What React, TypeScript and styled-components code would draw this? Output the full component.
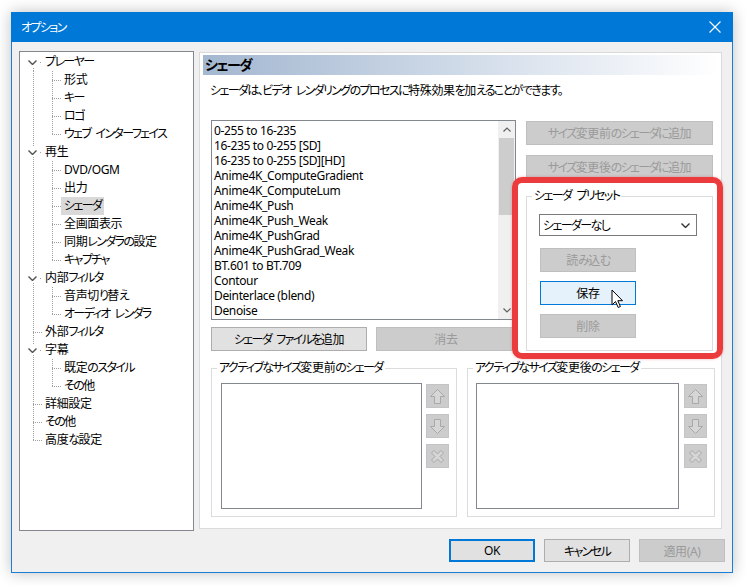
import React from "react";
import styled, { createGlobalStyle, css } from "styled-components";

const GlobalStyle = createGlobalStyle`
  html, body {
    margin: 0;
    background: #ffffff;
  }
  body {
    font-family: "Noto Sans", "Noto Sans CJK JP", sans-serif;
    font-size: 12px;
    letter-spacing: -0.35px;
    font-feature-settings: "palt";
    color: #000;
  }
  * { box-sizing: border-box; }
`;

// kana in the UI font are narrower than Noto's, tighten them
const Kana = styled.span`
  letter-spacing: -1.6px;
  word-spacing: 3.5px;
`;

const T = ({ children }: { children: string }) => {
  const parts = children.split(/([\u3001-\u30ff][\u3001-\u30ff ]*)/);
  return (
    <>
      {parts.map((p, i) => (/[\u3001-\u30ff]/.test(p) ? <Kana key={i}>{p}</Kana> : p))}
    </>
  );
};

const Page = styled.div`
  width: 746px;
  height: 586px;
  padding: 12px 0 0 11px;
`;

const Window = styled.div`
  width: 722px;
  height: 561px;
  display: flex;
  flex-direction: column;
  border: 1px solid #1a7fd4;
  border-top: none;
  box-shadow: 0 0 14px rgba(0, 0, 0, 0.25);
  background: #f0f0f0;
`;

const TitleBar = styled.div`
  height: 30px;
  margin: 0 -1px;
  background: #0078d7;
  color: #fff;
  display: flex;
  align-items: center;
  justify-content: space-between;
  padding: 0 12px 0 10px;
  font-size: 12px;
`;

const Client = styled.div`
  flex: 1;
  display: flex;
  flex-direction: column;
  padding: 9px 7px 0 7px;
`;

const Main = styled.div`
  display: flex;
  gap: 5px;
  align-items: flex-start;
`;

/* ---------- tree ---------- */

const Tree = styled.div`
  width: 175px;
  height: 480px;
  background: #fff;
  border: 1px solid #828790;
  padding-top: 1px;
`;

const TreeRow = styled.div`
  display: flex;
  height: 18px;
  align-items: center;
  line-height: 18px;
`;

type VLine = "full" | "top" | "bottom" | "none";

const dotsV = css`
  background-image: linear-gradient(to bottom, #a0a0a0 50%, transparent 50%);
  background-size: 1px 2px;
`;
const dotsH = css`
  background-image: linear-gradient(to right, #a0a0a0 50%, transparent 50%);
  background-size: 2px 1px;
`;

const Guide = styled.span<{ $w: number; $x: number; $v: VLine; $h0?: number }>`
  position: relative;
  flex: none;
  width: ${(p) => p.$w}px;
  height: 18px;
  &::before {
    content: "";
    position: absolute;
    left: ${(p) => p.$x}px;
    width: 1px;
    top: ${(p) => (p.$v === "bottom" ? 9 : 0)}px;
    height: ${(p) => (p.$v === "full" ? 18 : p.$v === "none" ? 0 : 9)}px;
    ${dotsV};
  }
  &::after {
    content: "";
    position: absolute;
    top: 9px;
    height: 1px;
    left: ${(p) => (p.$h0 === undefined ? 0 : p.$h0)}px;
    right: 0;
    display: ${(p) => (p.$h0 === undefined ? "none" : "block")};
    ${dotsH};
  }
`;

const Chevron = styled.span`
  position: absolute;
  left: 7px;
  top: 4px;
  width: 11px;
  height: 10px;
  background: #fff;
  display: flex;
  align-items: center;
  justify-content: center;
  z-index: 1;
`;

const TreeLabel = styled.span<{ $selected?: boolean }>`
  padding: 0 3px;
  height: 18px;
  white-space: nowrap;
  background: ${(p) => (p.$selected ? "#d9d9d9" : "transparent")};
`;

/* ---------- panel ---------- */

const Panel = styled.div`
  width: 523px;
  height: 477px;
  margin-top: 1px;
  background: #fff;
  border: 1px solid #dadada;
  padding: 2px 2px 0 3px;
`;

const Header = styled.div`
  height: 20px;
  background: linear-gradient(to right, #a3b7d0 0%, #cbd7e6 45%, #ffffff 100%);
  font-weight: 700;
  font-size: 14px;
  line-height: 20px;
  padding-left: 2px;
`;

const Description = styled.div`
  margin-top: 8px;
  padding-left: 7px;
  line-height: 16px;
`;

const Body = styled.div`
  padding-left: 8px;
`;

const TopArea = styled.div`
  display: flex;
  gap: 10px;
  margin-top: 21px;
`;

const LeftCol = styled.div`
  width: 305px;
  display: flex;
  flex-direction: column;
  gap: 7px;
`;

const RightCol = styled.div`
  position: relative;
  width: 187px;
  display: flex;
  flex-direction: column;
  padding-top: 1px;
  gap: 10px;
`;

const ListBox = styled.div`
  height: 200px;
  border: 1px solid #828790;
  display: flex;
  background: #fff;
`;

const ListItems = styled.div`
  flex: 1;
  padding: 2px 0 0 2px;
  overflow: hidden;
`;

const ListItem = styled.div`
  height: 15px;
  line-height: 15px;
  white-space: nowrap;
`;

const ScrollBar = styled.div`
  width: 17px;
  background: #f0f0f0;
  display: flex;
  flex-direction: column;
  align-items: center;
`;

const ScrollArrow = styled.div`
  height: 17px;
  width: 17px;
  display: flex;
  align-items: center;
  justify-content: center;
`;

const ScrollTrack = styled.div`
  flex: 1;
  width: 100%;
  padding: 0 1px;
`;

const Thumb = styled.div`
  height: 77px;
  background: #cdcdcd;
`;

const ButtonRow = styled.div`
  display: flex;
  gap: 9px;
`;

const Button = styled.button<{ $w?: number; $h?: number; $state?: "normal" | "disabled" | "hover" | "default" }>`
  position: relative;
  flex: none;
  width: ${(p) => (p.$w ? `${p.$w}px` : "100%")};
  height: ${(p) => p.$h ?? 24}px;
  font: inherit;
  letter-spacing: inherit;
  padding: 0;
  margin: 0;
  display: flex;
  align-items: center;
  justify-content: center;
  ${(p) => {
    switch (p.$state) {
      case "disabled":
        return css`
          background: #cccccc;
          border: 1px solid #bfbfbf;
          color: #9a9a9a;
        `;
      case "hover":
        return css`
          background: #e5f1fb;
          border: 1px solid #0078d7;
          color: #000;
        `;
      case "default":
        return css`
          background: #e1e1e1;
          border: 2px solid #0078d7;
          color: #000;
        `;
      default:
        return css`
          background: #e1e1e1;
          border: 1px solid #adadad;
          color: #000;
        `;
    }
  }}
`;

const Group = styled.fieldset<{ $w: number; $h: number; $pl: number }>`
  margin: 0;
  width: ${(p) => p.$w}px;
  height: ${(p) => p.$h}px;
  border: 1px solid #dcdcdc;
  padding: 7px 0 0 ${(p) => p.$pl}px;
  min-width: 0;
`;

const Legend = styled.legend<{ $pl: number }>`
  margin-left: ${(p) => 5 - p.$pl}px;
  padding: 0 2px;
  line-height: 16px;
`;

const PresetBody = styled.div`
  display: flex;
  flex-direction: column;
  padding-top: 3px;
`;

const Select = styled.div`
  width: 158px;
  height: 22px;
  border: 1px solid #7a7a7a;
  background: #fff;
  display: flex;
  align-items: center;
  justify-content: space-between;
  padding: 0 6px 0 3px;
  margin-bottom: 12px;
`;

const PresetButtons = styled.div`
  display: flex;
  flex-direction: column;
  gap: 9px;
  padding-left: 1px;
`;

const Highlight = styled.div`
  position: absolute;
  left: -14px;
  top: 57px;
  width: 211px;
  height: 182px;
  border: 6px solid #ec3b3d;
  border-radius: 10px;
  box-shadow: 0 0 3px rgba(200, 40, 40, 0.35);
  pointer-events: none;
`;

const Cursor = styled.svg`
  position: absolute;
  left: 70px;
  top: 7px;
`;

const GroupsRow = styled.div`
  display: flex;
  gap: 10px;
  margin-top: 9px;
`;

const GroupInner = styled.div<{ $gap: number }>`
  display: flex;
  gap: ${(p) => p.$gap}px;
  align-items: flex-start;
`;

const EmptyList = styled.div<{ $w: number }>`
  width: ${(p) => p.$w}px;
  height: 126px;
  border: 1px solid #828790;
  background: #fff;
`;

const IconButtons = styled.div`
  display: flex;
  flex-direction: column;
  gap: 6px;
  padding-top: 1px;
`;

const IconButton = styled.div`
  width: 23px;
  height: 24px;
  background: #cccccc;
  border: 1px solid #c4c4c4;
  display: flex;
  align-items: center;
  justify-content: center;
`;

const Footer = styled.div`
  display: flex;
  justify-content: flex-end;
  gap: 9px;
  margin-top: 8px;
`;

/* ---------- data ---------- */

type Node = { label: string; level: 0 | 1; expand?: boolean; last?: boolean; selected?: boolean; first?: boolean; end?: boolean };

const tree: Node[] = [
  { label: "プレーヤー", level: 0, expand: true, first: true },
  { label: "形式", level: 1 },
  { label: "キー", level: 1 },
  { label: "ロゴ", level: 1 },
  { label: "ウェブ インターフェイス", level: 1, last: true },
  { label: "再生", level: 0, expand: true },
  { label: "DVD/OGM", level: 1 },
  { label: "出力", level: 1 },
  { label: "シェーダ", level: 1, selected: true },
  { label: "全画面表示", level: 1 },
  { label: "同期レンダラの設定", level: 1 },
  { label: "キャプチャ", level: 1, last: true },
  { label: "内部フィルタ", level: 0, expand: true },
  { label: "音声切り替え", level: 1 },
  { label: "オーディオ レンダラ", level: 1, last: true },
  { label: "外部フィルタ", level: 0 },
  { label: "字幕", level: 0, expand: true },
  { label: "既定のスタイル", level: 1 },
  { label: "その他", level: 1, last: true },
  { label: "詳細設定", level: 0 },
  { label: "その他", level: 0 },
  { label: "高度な設定", level: 0, end: true },
];

const shaders = [
  "0-255 to 16-235",
  "16-235 to 0-255 [SD]",
  "16-235 to 0-255 [SD][HD]",
  "Anime4K_ComputeGradient",
  "Anime4K_ComputeLum",
  "Anime4K_Push",
  "Anime4K_Push_Weak",
  "Anime4K_PushGrad",
  "Anime4K_PushGrad_Weak",
  "BT.601 to BT.709",
  "Contour",
  "Deinterlace (blend)",
  "Denoise",
];

/* ---------- icons ---------- */

const ChevronDown = ({ color = "#505050", w = 9 }: { color?: string; w?: number }) => (
  <svg width={w} height={5} viewBox="0 0 9 5">
    <polyline points="0.5,0.5 4.5,4.5 8.5,0.5" fill="none" stroke={color} strokeWidth="1.4" />
  </svg>
);

const ScrollChevron = ({ up }: { up?: boolean }) => (
  <svg width="8" height="5" viewBox="0 0 8 5">
    <polyline
      points={up ? "0.5,4.5 4,1 7.5,4.5" : "0.5,0.5 4,4 7.5,0.5"}
      fill="none"
      stroke="#606060"
      strokeWidth="1.2"
    />
  </svg>
);

const ArrowIcon = ({ kind }: { kind: "up" | "down" | "x" }) => {
  const stroke = "#a9a9a9";
  const fill = "#d6d6d6";
  if (kind === "x") {
    return (
      <svg width="15" height="15" viewBox="0 0 15 15">
        <path
          d="M1.5 4 L4 1.5 L7.5 5 L11 1.5 L13.5 4 L10 7.5 L13.5 11 L11 13.5 L7.5 10 L4 13.5 L1.5 11 L5 7.5 Z"
          fill={fill}
          stroke={stroke}
        />
      </svg>
    );
  }
  const d = "M7.5 0.5 L14.5 7.5 L10.5 7.5 L10.5 14.5 L4.5 14.5 L4.5 7.5 L0.5 7.5 Z";
  return (
    <svg width="15" height="15" viewBox="0 0 15 15" style={kind === "down" ? { transform: "rotate(180deg)" } : undefined}>
      <path d={d} fill={fill} stroke={stroke} />
    </svg>
  );
};

const CloseIcon = () => (
  <svg width="12" height="12" viewBox="0 0 12 12">
    <path d="M0.5 0.5 L11.5 11.5 M11.5 0.5 L0.5 11.5" stroke="#fff" strokeWidth="1.1" />
  </svg>
);

function TreeItem({ node }: { node: Node }) {
  if (node.level === 0) {
    const v: VLine = node.first ? "bottom" : node.end ? "top" : "full";
    return (
      <TreeRow>
        <Guide $w={22} $x={13} $v={v} $h0={node.expand ? 20 : 13}>
          {node.expand && (
            <Chevron>
              <ChevronDown />
            </Chevron>
          )}
        </Guide>
        <TreeLabel $selected={node.selected}>
          <T>{node.label}</T>
        </TreeLabel>
      </TreeRow>
    );
  }
  return (
    <TreeRow>
      <Guide $w={22} $x={13} $v="full" />
      <Guide $w={19} $x={10} $v={node.last ? "top" : "full"} $h0={10} />
      <TreeLabel $selected={node.selected}>
        <T>{node.label}</T>
      </TreeLabel>
    </TreeRow>
  );
}

function ActiveGroup({ title, w, pl, listW, gap }: { title: string; w: number; pl: number; listW: number; gap: number }) {
  return (
    <Group $w={w} $h={157} $pl={pl}>
      <Legend $pl={pl}>
        <T>{title}</T>
      </Legend>
      <GroupInner $gap={gap}>
        <EmptyList $w={listW} />
        <IconButtons>
          <IconButton>
            <ArrowIcon kind="up" />
          </IconButton>
          <IconButton>
            <ArrowIcon kind="down" />
          </IconButton>
          <IconButton>
            <ArrowIcon kind="x" />
          </IconButton>
        </IconButtons>
      </GroupInner>
    </Group>
  );
}

export default function App() {
  return (
    <>
      <GlobalStyle />
      <Page>
        <Window>
          <TitleBar>
            <span>
              <T>オプション</T>
            </span>
            <CloseIcon />
          </TitleBar>
          <Client>
            <Main>
              <Tree>
                {tree.map((n, i) => (
                  <TreeItem key={i} node={n} />
                ))}
              </Tree>
              <Panel>
                <Header>
                  <T>シェーダ</T>
                </Header>
                <Description>
                  <T>シェーダは、ビデオ レンダリングのプロセスに特殊効果を加えることができます。</T>
                </Description>
                <Body>
                  <TopArea>
                    <LeftCol>
                      <ListBox>
                        <ListItems>
                          {shaders.map((s) => (
                            <ListItem key={s}>{s}</ListItem>
                          ))}
                        </ListItems>
                        <ScrollBar>
                          <ScrollArrow>
                            <ScrollChevron up />
                          </ScrollArrow>
                          <ScrollTrack>
                            <Thumb />
                          </ScrollTrack>
                          <ScrollArrow>
                            <ScrollChevron />
                          </ScrollArrow>
                        </ScrollBar>
                      </ListBox>
                      <ButtonRow>
                        <Button $w={156}>
                          <T>シェーダ ファイルを追加</T>
                        </Button>
                        <Button $w={140} $state="disabled">
                          消去
                        </Button>
                      </ButtonRow>
                    </LeftCol>
                    <RightCol>
                      <Button $state="disabled">
                        <T>サイズ変更前のシェーダに追加</T>
                      </Button>
                      <Button $state="disabled">
                        <T>サイズ変更後のシェーダに追加</T>
                      </Button>
                      <Group $w={187} $h={163} $pl={12} style={{ marginTop: -1 }}>
                        <Legend $pl={12}>
                          <T>シェーダ プリセット</T>
                        </Legend>
                        <PresetBody>
                          <Select>
                            <span>
                              <T>シェーダーなし</T>
                            </span>
                            <ChevronDown color="#333" w={9} />
                          </Select>
                          <PresetButtons>
                            <Button $w={96} $state="disabled">
                              <T>読み込む</T>
                            </Button>
                            <Button $w={96} $state="hover">
                              保存
                              <Cursor width="14" height="20" viewBox="0 0 14 20">
                                <path
                                  d="M1 1 L1 16 L4.5 12.5 L7.2 18.5 L9.4 17.5 L6.8 11.7 L11.5 11.7 Z"
                                  fill="#fff"
                                  stroke="#000"
                                  strokeWidth="1"
                                  strokeLinejoin="miter"
                                />
                              </Cursor>
                            </Button>
                            <Button $w={96} $state="disabled">
                              削除
                            </Button>
                          </PresetButtons>
                        </PresetBody>
                      </Group>
                      <Highlight />
                    </RightCol>
                  </TopArea>
                  <GroupsRow>
                    <ActiveGroup title="アクティブなサイズ変更前のシェーダ" w={246} pl={9} listW={201} gap={4} />
                    <ActiveGroup title="アクティブなサイズ変更後のシェーダ" w={248} pl={8} listW={203} gap={5} />
                  </GroupsRow>
                </Body>
              </Panel>
            </Main>
            <Footer>
              <Button $w={86} $h={23} $state="default">
                OK
              </Button>
              <Button $w={86} $h={23}>
                <T>キャンセル</T>
              </Button>
              <Button $w={86} $h={23} $state="disabled">
                適用(A)
              </Button>
            </Footer>
          </Client>
        </Window>
      </Page>
    </>
  );
}
